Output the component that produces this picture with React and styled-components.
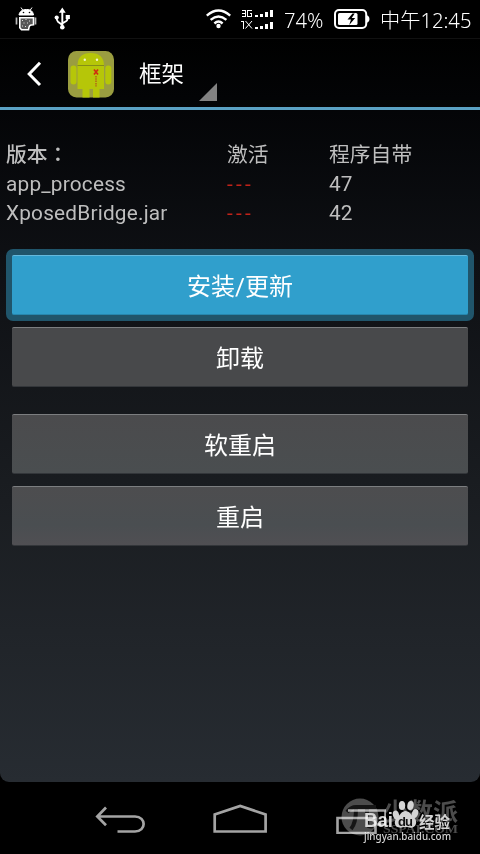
import React from 'react';
import styled, {createGlobalStyle} from 'styled-components';

const ACCENT = '#5ba2c5';
const FONT = "Roboto, 'Noto Sans CJK SC', sans-serif";

const GlobalStyle = createGlobalStyle`
  body {
    margin: 0;
    background: #000;
  }
`;

const Screen = styled.div`
  position: relative;
  display: flex;
  flex-direction: column;
  width: 480px;
  height: 854px;
  overflow: hidden;
  background: #000;
  color: #fff;
  font-family: ${FONT};
`;

const StatusBar = styled.header`
  display: flex;
  align-items: center;
  flex: none;
  box-sizing: border-box;
  height: 38px;
  padding-left: 15px;
  background: #000;

  svg {
    display: block;
    flex: none;
  }
`;

const StatusText = styled.span`
  width: ${props => props.$width}px;
  margin-left: ${props => props.$gap}px;
  padding-top: 1px;
  font-family: 'Noto Sans', 'Noto Sans CJK SC', sans-serif;
  font-size: 20.2px;
  font-weight: 300;
  line-height: 38px;
  white-space: nowrap;
`;

const Spacer = styled.div`
  flex: 1;
`;

const AppWindow = styled.main`
  display: flex;
  flex-direction: column;
  flex: none;
  height: 744px;
  border-radius: 0 0 9px 9px;
  background: linear-gradient(#000 0%, #030406 8%, #0e1014 30%, #1a1d21 62%, #272c32 100%);
`;

const ActionBar = styled.div`
  display: flex;
  align-items: flex-start;
  flex: none;
  box-sizing: border-box;
  height: 72px;
  padding-left: 26px;
  border-top: 1px solid #111;
  border-bottom: 3px solid ${ACCENT};

  svg {
    display: block;
  }
`;

const BackArrow = styled.svg`
  margin: 22px 26px 0 0;
`;

const AppIcon = styled.svg`
  margin-top: 12px;
`;

const Title = styled.h1`
  margin: 0 0 0 25px;
  font-size: 22.5px;
  font-weight: 400;
  line-height: 70px;
`;

const SpinnerMark = styled.svg`
  margin: 44px 0 0 15px;
`;

const Versions = styled.section`
  display: grid;
  grid-template-columns: 221px 102px 1fr;
  grid-template-rows: 29px 29px 29px;
  padding: 31px 6px 0;
  color: #bebebe;
  font-family: Roboto, 'Noto Sans CJK SC', sans-serif;
  font-size: 20.8px;
  line-height: 29px;
  white-space: nowrap;
`;

const Cell = styled.span`
  color: ${props => (props.$missing ? '#c0231a' : 'inherit')};
  font-weight: ${props => (props.$strong ? 500 : 400)};
  letter-spacing: ${props => props.$spacing || 0}px;
`;

// full-width colon sits in the middle of its box only in the TC face
const Colon = styled.span`
  font-family: 'Noto Sans CJK TC', sans-serif;
  line-height: 1;
`;

const Actions = styled.div`
  display: flex;
  flex-direction: column;
  padding: 21px 6px 0;
`;

const ActionButton = styled.button`
  display: block;
  box-sizing: border-box;
  width: 468px;
  height: 72px;
  margin: 0 0 ${props => props.$after || 0}px;
  padding: 6px;
  border: 0;
  border-radius: 7px;
  background: ${props => (props.$focused ? '#20556b' : 'transparent')};
  color: #fff;
  font-family: ${FONT};
  font-size: 24px;
`;

const ButtonFace = styled.span`
  display: block;
  box-sizing: border-box;
  height: 60px;
  border-top: 1px solid ${props => (props.$focused ? '#65b9dc' : '#7c7e80')};
  border-bottom: 1px solid ${props => (props.$focused ? '#2787ae' : '#33363a')};
  border-radius: 2px;
  background: ${props => (props.$focused ? '#309fcc' : props.$tone)};
  line-height: 62px;
  text-align: center;
`;

const NavBar = styled.nav`
  display: flex;
  justify-content: space-between;
  flex: none;
  box-sizing: border-box;
  height: 72px;
  padding: 22px 94px 0 94px;
`;

const Watermark = styled.svg`
  position: absolute;
  left: 336px;
  top: 790px;
  mix-blend-mode: screen;
`;

const versions = [
  {name: 'app_process', active: '---', bundled: '47'},
  {name: 'XposedBridge.jar', active: '---', bundled: '42'}
];

const actions = [
  {label: '安装/更新', focused: true},
  {label: '卸载', tone: '#48494b', after: 15},
  {label: '软重启', tone: 'linear-gradient(#4b4b4d, #4a4e50)'},
  {label: '重启', tone: 'linear-gradient(#4d4d4f, #4a4e51 65%, #504f53)'}
];

function DebugIcon() {
  return (
    <svg width="22" height="24" viewBox="0 0 22 24" fill="#fff">
      <path d="M4 8C4.5 4.5 7 2.5 11.5 2.5S18 4.5 18.5 8zM6 .5l2 3M17 .5l-2 3" stroke="#fff" strokeWidth="1" />
      <circle cx="8.5" cy="5.5" r=".8" fill="#000" />
      <circle cx="14.5" cy="5.5" r=".8" fill="#000" />
      <path d="M1.5 10.5v7M20.5 10.5v7" stroke="#bbb" strokeWidth="1.7" />
      <path d="M4.8 10.8H18.5v7c-4 0-4.5 1-5 5H6.5l-1.7-2z" fill="#555" stroke="#fff" strokeWidth="1.6" />
      <path d="M7 13.5h1M10.5 12.5h1M14 14h1M8.5 16h1M12 16h1M7 19h1M10 19.5h1" stroke="#ddd" strokeWidth="1" />
    </svg>
  );
}

function UsbIcon() {
  return (
    <svg width="17" height="24" viewBox="0 0 17 24" fill="none" stroke="#fff" strokeWidth="1.9" style={{marginLeft: 17}}>
      <path d="M8.3 4v16M8.3 18L4 14.8Q2.6 13.5 2.6 10M8.3 16.5l4-2.5q1.5-1 1.5-5" />
      <path d="M8.3.5l3.4 5.3H4.9z" fill="#fff" stroke="none" />
      <circle cx="2.7" cy="10.5" r="2.1" fill="#fff" stroke="none" />
      <path d="M11.7 8h4.2v4h-4.2z" fill="#fff" stroke="none" />
      <circle cx="8.3" cy="20.3" r="2.3" fill="#fff" stroke="none" />
    </svg>
  );
}

function WifiIcon() {
  return (
    <svg width="25" height="20" viewBox="0 0 25 20" fill="none" stroke="#fff" strokeWidth="2.4">
      <path d="M.8 6.6Q12.5-3.4 24.2 6.6M4.6 10.8q7.9-6.8 15.8 0M8.4 14.5q4.1-3.8 8.2 0" />
      <circle cx="12.5" cy="17" r="2.2" fill="#fff" stroke="none" />
    </svg>
  );
}

function SignalIcon() {
  return (
    <svg width="33" height="20" viewBox="0 0 33 20" fill="#fff" style={{marginLeft: 10}}>
      <g fill="none" stroke="#fff" strokeWidth="1" shapeRendering="crispEdges">
        <path d="M.5 1.5h4v6h-4M1 4.5h3.5M11 1.5H6.5v6h4v-3H8.5" />
        <path d="M0 12.5h2.5V20" />
      </g>
      <path d="M4.5 12l6.5 7.5M11 12l-6.5 7.5" fill="none" stroke="#fff" strokeWidth="1" />
      <path d="M14 6h3v2h-3zM19 5h3v3h-3zM24 3h3v5h-3zM29 1h3v7h-3z" />
      <path d="M14 18h3v2h-3zM19 17h3v3h-3zM24 15h3v5h-3zM29 13h3v7h-3z" />
    </svg>
  );
}

function BatteryIcon() {
  return (
    <svg width="36" height="20" viewBox="0 0 36 20" style={{marginLeft: 10}}>
      <rect x="1" y="1" width="31.2" height="18" rx="4" fill="#000" stroke="#fff" strokeWidth="2" />
      <path d="M33 6.5h.7q1.8 1 1.8 3.5t-1.8 3.5H33z" fill="#fff" />
      <rect x="4" y="4" width="19.5" height="12" rx="1.5" fill="#fff" />
      <path d="M18.5 4.5l-5 6h3.5l-1.8 5.5 6-7h-3.5l3-4.5z" fill="#000" />
    </svg>
  );
}

function XposedIcon() {
  return (
    <AppIcon width="46" height="47" viewBox="0 0 46 47">
      <rect width="46" height="46.5" rx="8.5" fill="#9a9d40" />
      <path d="M9.5 14Q10 2 22.7 2T36 14v24H9.5z" fill="#b6c608" />
      <path d="M14.5 36h7v10.5h-7zM25 36h6.5v10.5H25z" fill="#b6c608" />
      <rect x="2.5" y="14.5" width="6" height="19" rx="3" fill="#b6c608" />
      <rect x="37.3" y="14.5" width="6" height="19" rx="3" fill="#b6c608" />
      <path d="M9.5 14.5H36" stroke="#858e18" strokeWidth="1" />
      <circle cx="16.8" cy="8.8" r="1.2" fill="#f4f6cf" />
      <circle cx="29" cy="8.8" r="1.2" fill="#f4f6cf" />
      <path d="M26 18.5l4 5M30 18.5l-4 5" stroke="#cf2d10" strokeWidth="1.7" />
      <path d="M28 25v10.5" stroke="#b26416" strokeWidth="1.5" strokeDasharray="1.5 .8" />
    </AppIcon>
  );
}

function Navigation() {
  return (
    <NavBar>
      <svg width="51" height="30" viewBox="0 0 51 30" fill="none" stroke="#a4a4a4" strokeWidth="2.7">
        <path d="M12 3.5L3.3 12.5 12 21.2M3.5 12.5H41c11.5 0 11.5 15 0 15H23.5" />
      </svg>
      <svg width="55" height="30" viewBox="0 0 55 30" fill="none" stroke="#a4a4a4" strokeWidth="2.7">
        <path d="M1.7 27.5v-17L27.2 2l25.4 8.5v17z" />
      </svg>
      <svg width="51" height="30" viewBox="0 0 51 30" fill="none" stroke="#a4a4a4" strokeWidth="2.6">
        <path d="M2.5 14h38v15h-38zM13 6.5h37.5v14H42" />
      </svg>
    </NavBar>
  );
}

function Marks() {
  return (
    <Watermark width="130" height="60" viewBox="0 0 130 60">
      <g fill="#4c4c4c">
        <circle cx="24" cy="27" r="18.5" />
        <path d="M11 22q4-5 9-5h20M20 19q0 14-5 20M31 19v13q0 6 6 4" fill="none" stroke="#151515" strokeWidth="4" />
        <text x="47" y="31" fontFamily="'Noto Sans CJK SC', sans-serif" fontWeight="700" fontSize="25" textLength="75">少数派</text>
        <text x="47" y="43" fontFamily="'Liberation Serif', serif" fontWeight="700" fontSize="13" textLength="75" lengthAdjust="spacingAndGlyphs">SSPAI.COM</text>
      </g>
      <g fill="#d4d4d4">
        <text x="28" y="37" fontFamily="'Liberation Sans', sans-serif" fontWeight="700" fontSize="19.5" textLength="29" lengthAdjust="spacingAndGlyphs">Bai</text>
        <ellipse cx="60" cy="25" rx="3.1" ry="4.5" transform="rotate(-15 60 25)" />
        <ellipse cx="66" cy="15.5" rx="3.2" ry="4.6" />
        <ellipse cx="74.5" cy="15.5" rx="3.2" ry="4.6" transform="rotate(10 74.5 15.5)" />
        <ellipse cx="79" cy="23.5" rx="3.1" ry="4.5" transform="rotate(20 79 23.5)" />
        <path d="M69.5 21c4 0 5.5 4 8 6 4 3 3.5 9-1 10.5-3 .7-4-.4-7-.4s-4 1.1-7.3.2c-4.4-1.2-4.5-7.3-.5-10.3 2.6-2 4-6 7.8-6z" />
        <text x="62" y="35.5" fill="#111" fontFamily="'Liberation Sans', sans-serif" fontWeight="700" fontSize="13" textLength="15">du</text>
        <text x="83" y="37.5" fontFamily="'Noto Sans CJK SC', sans-serif" fontWeight="700" fontSize="16" textLength="31" lengthAdjust="spacingAndGlyphs">经验</text>
        <text x="28" y="49.5" fontFamily="'Noto Sans', sans-serif" fontWeight="500" fontSize="10.5" textLength="87" lengthAdjust="spacingAndGlyphs">jingyan.baidu.com</text>
      </g>
    </Watermark>
  );
}

export default function App() {
  return (
    <>
      <GlobalStyle />
      <Screen>
        <StatusBar>
          <DebugIcon />
          <UsbIcon />
          <Spacer />
          <WifiIcon />
          <SignalIcon />
          <StatusText $width={40} $gap={10}>74%</StatusText>
          <BatteryIcon />
          <StatusText $width={100} $gap={10}>中午12:45</StatusText>
        </StatusBar>
        <AppWindow>
          <ActionBar>
            <BackArrow width="16" height="26" viewBox="0 0 16 26" fill="none" stroke="#fff" strokeWidth="3">
              <path d="M14 1.8L3.2 13 14 24" />
            </BackArrow>
            <XposedIcon />
            <Title>框架</Title>
            <SpinnerMark width="18" height="18" viewBox="0 0 18 18">
              <path d="M18 0v18H0z" fill="#828282" />
            </SpinnerMark>
          </ActionBar>
          <Versions>
            <Cell $strong>版本<Colon>：</Colon></Cell>
            <Cell>激活</Cell>
            <Cell>程序自带</Cell>
            {versions.map(row => (
              <React.Fragment key={row.name}>
                <Cell $spacing={0.2}>{row.name}</Cell>
                <Cell $missing $spacing={3.3}>{row.active}</Cell>
                <Cell>{row.bundled}</Cell>
              </React.Fragment>
            ))}
          </Versions>
          <Actions>
            {actions.map(({label, focused, tone, after}) => (
              <ActionButton key={label} $focused={focused} $after={after}>
                <ButtonFace $focused={focused} $tone={tone}>{label}</ButtonFace>
              </ActionButton>
            ))}
          </Actions>
        </AppWindow>
        <Navigation />
        <Marks />
      </Screen>
    </>
  );
}
